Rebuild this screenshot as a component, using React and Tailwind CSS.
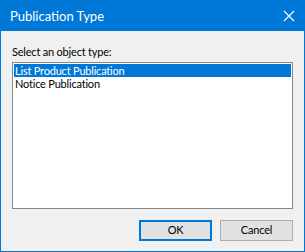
const items = ["List Product Publication", "Notice Publication"];

const App = () => {
    return (
        <div className="w-[305px] h-[252px] flex flex-col border border-[#0078d7] bg-[#f0f0f0] text-[11px] tracking-[-0.2px] text-black" style={{ fontFamily: 'Lato, "Liberation Sans", sans-serif' }}>
            {/* title bar */}
            <div className="flex h-[30px] shrink-0 items-center justify-between bg-[#0078d7] pl-[9px] pr-[9px] text-white">
                <span className="text-[13px] tracking-normal leading-none">Publication Type</span>
                <svg width="12" height="12" viewBox="0 0 12 12">
                    <path d="M1 1 L11 11 M11 1 L1 11" stroke="#ffffff" strokeWidth="1.1" fill="none" />
                </svg>
            </div>
            {/* body */}
            <div className="flex flex-1 flex-col px-[11px]">
                <div className="mt-[12px] h-[17px] leading-[17px]">Select an object type:</div>
                <div className="mt-[2px] h-[147px] border border-[#828790] bg-white p-[1px]">
                    {items.map((value, index) => (
                        <div key={index} className={index === 0 ? "h-[13px] leading-[13px] bg-[#0078d7] pl-[1px] text-white" : "h-[13px] leading-[13px] pl-[1px]"}>
                            {value}
                        </div>
                    ))}
                </div>
                <div className="mt-[11px] flex justify-end gap-[8px]">
                    <div className="flex h-[21px] w-[73px] items-center justify-center border-2 border-[#0078d7] bg-[#e1e1e1]">OK</div>
                    <div className="flex h-[21px] w-[73px] items-center justify-center border border-[#adadad] bg-[#e1e1e1]">Cancel</div>
                </div>
            </div>
        </div>
    );
};

export default App;
